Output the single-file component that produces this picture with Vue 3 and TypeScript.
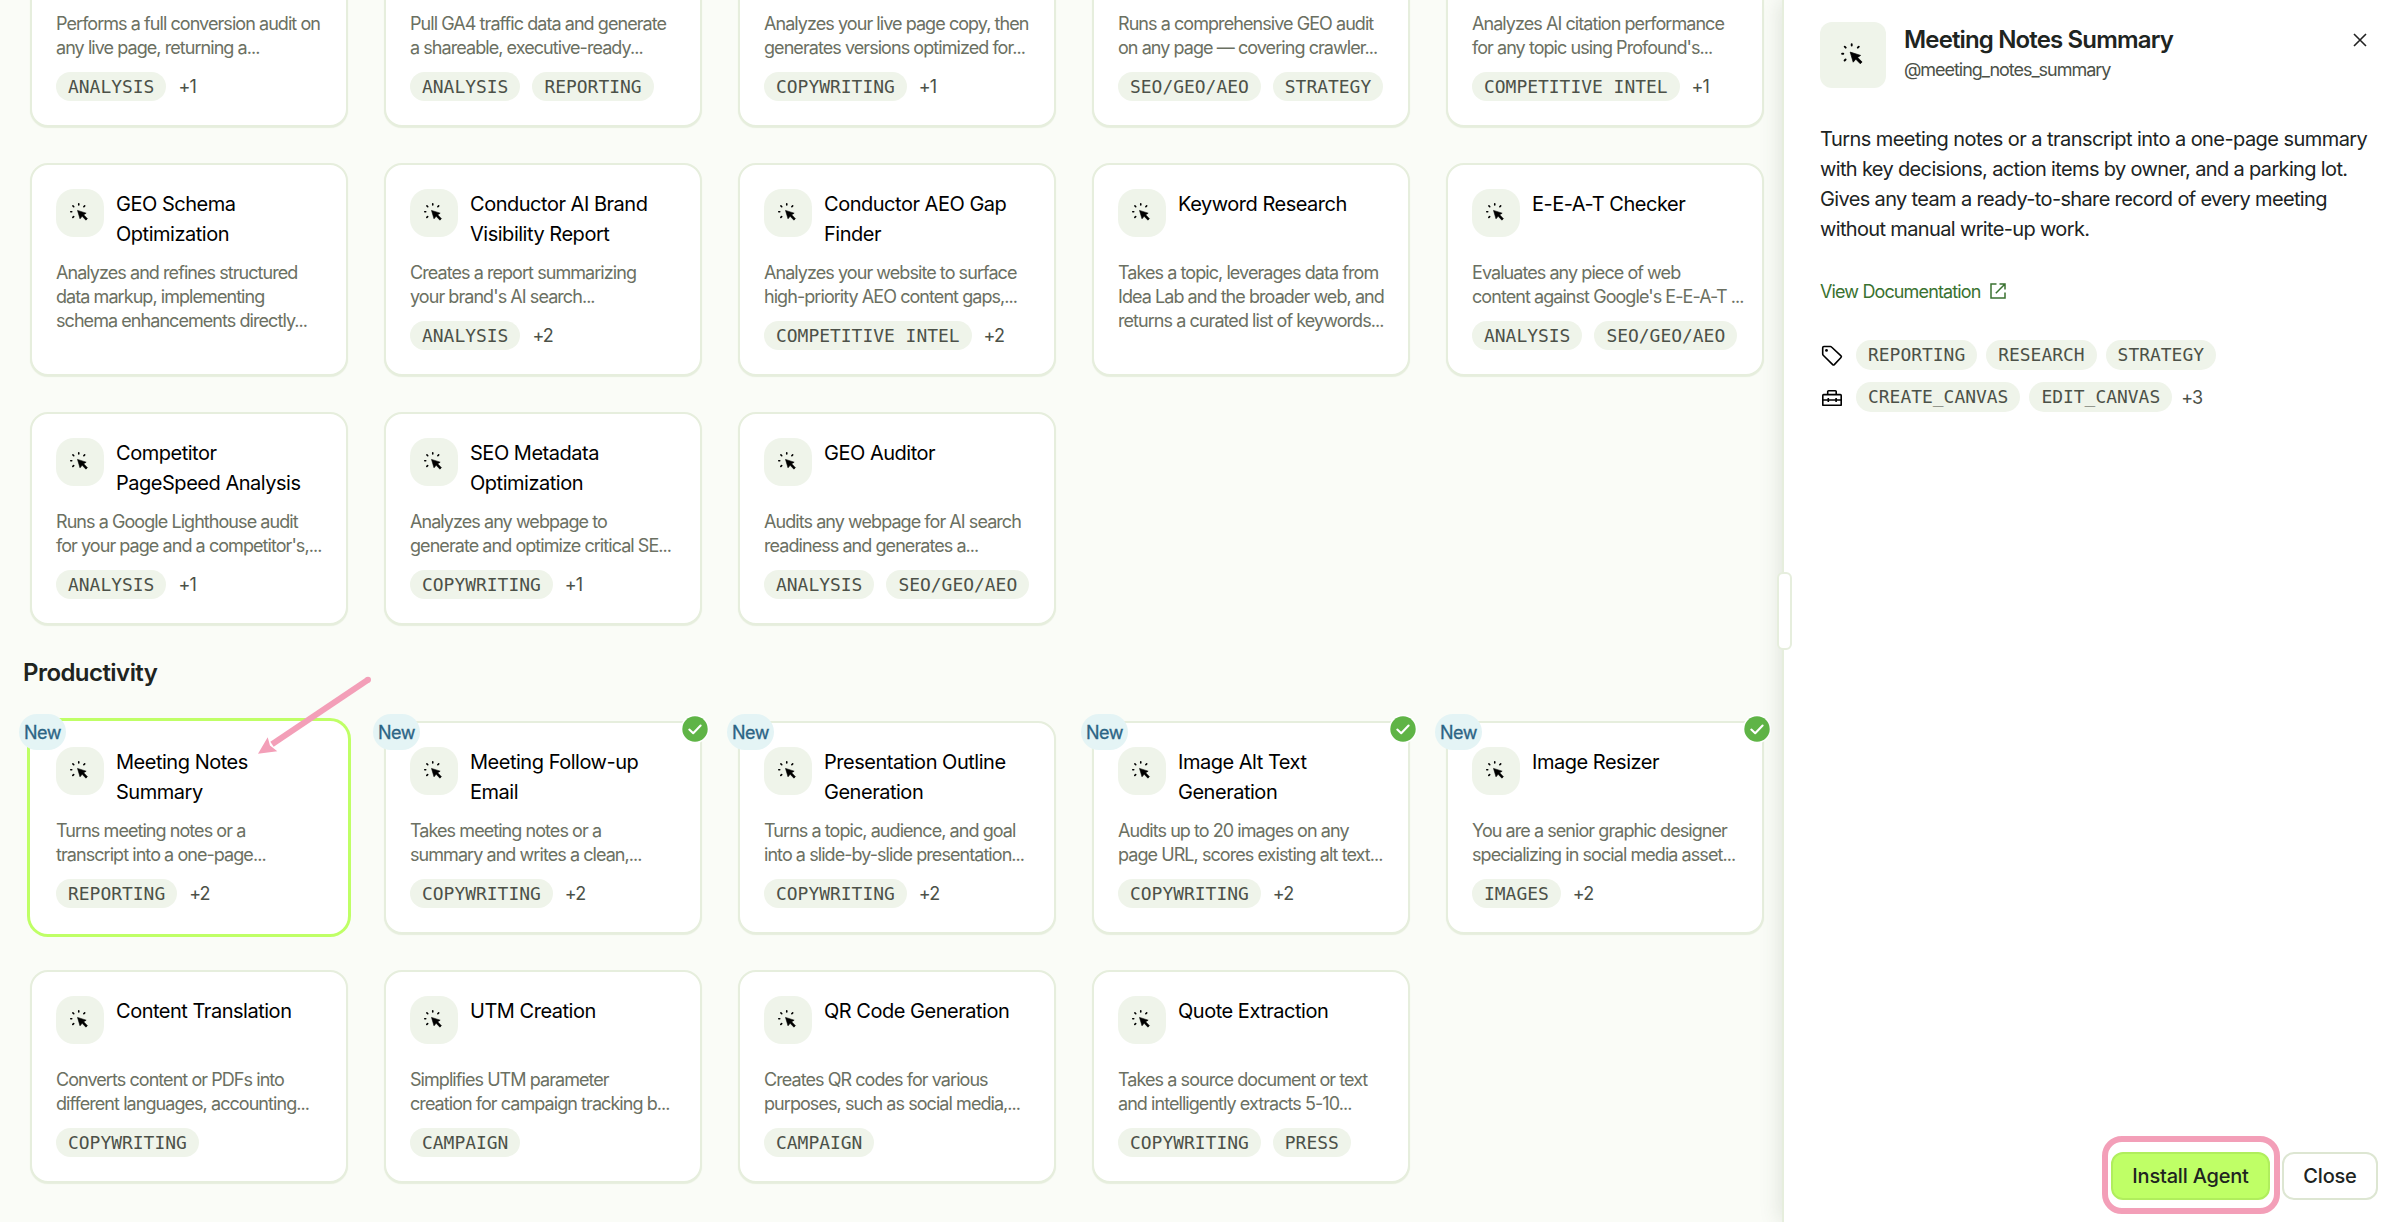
<script setup lang="ts">
interface Agent {
  title: string[]
  desc: string[]
  tags: string[]
  more?: string
  isNew?: boolean
  installed?: boolean
  selected?: boolean
}

const marketing: Agent[] = [
  { title: [], desc: ['Performs a full conversion audit on', 'any live page, returning a...'], tags: ['ANALYSIS'], more: '+1' },
  { title: [], desc: ['Pull GA4 traffic data and generate', 'a shareable, executive-ready...'], tags: ['ANALYSIS', 'REPORTING'] },
  { title: [], desc: ['Analyzes your live page copy, then', 'generates versions optimized for...'], tags: ['COPYWRITING'], more: '+1' },
  { title: [], desc: ['Runs a comprehensive GEO audit', 'on any page — covering crawler...'], tags: ['SEO/GEO/AEO', 'STRATEGY'] },
  { title: [], desc: ['Analyzes AI citation performance', "for any topic using Profound's..."], tags: ['COMPETITIVE INTEL'], more: '+1' },
  { title: ['GEO Schema', 'Optimization'], desc: ['Analyzes and refines structured', 'data markup, implementing', 'schema enhancements directly...'], tags: [] },
  { title: ['Conductor AI Brand', 'Visibility Report'], desc: ['Creates a report summarizing', "your brand's AI search..."], tags: ['ANALYSIS'], more: '+2' },
  { title: ['Conductor AEO Gap', 'Finder'], desc: ['Analyzes your website to surface', 'high-priority AEO content gaps,...'], tags: ['COMPETITIVE INTEL'], more: '+2' },
  { title: ['Keyword Research'], desc: ['Takes a topic, leverages data from', 'Idea Lab and the broader web, and', 'returns a curated list of keywords...'], tags: [] },
  { title: ['E-E-A-T Checker'], desc: ['Evaluates any piece of web', "content against Google's E-E-A-T ..."], tags: ['ANALYSIS', 'SEO/GEO/AEO'] },
  { title: ['Competitor', 'PageSpeed Analysis'], desc: ['Runs a Google Lighthouse audit', "for your page and a competitor's,..."], tags: ['ANALYSIS'], more: '+1' },
  { title: ['SEO Metadata', 'Optimization'], desc: ['Analyzes any webpage to', 'generate and optimize critical SE...'], tags: ['COPYWRITING'], more: '+1' },
  { title: ['GEO Auditor'], desc: ['Audits any webpage for AI search', 'readiness and generates a...'], tags: ['ANALYSIS', 'SEO/GEO/AEO'] },
]

const productivity: Agent[] = [
  { title: ['Meeting Notes', 'Summary'], desc: ['Turns meeting notes or a', 'transcript into a one-page...'], tags: ['REPORTING'], more: '+2', isNew: true, selected: true },
  { title: ['Meeting Follow-up', 'Email'], desc: ['Takes meeting notes or a', 'summary and writes a clean,...'], tags: ['COPYWRITING'], more: '+2', isNew: true, installed: true },
  { title: ['Presentation Outline', 'Generation'], desc: ['Turns a topic, audience, and goal', 'into a slide-by-slide presentation...'], tags: ['COPYWRITING'], more: '+2', isNew: true },
  { title: ['Image Alt Text', 'Generation'], desc: ['Audits up to 20 images on any', 'page URL, scores existing alt text...'], tags: ['COPYWRITING'], more: '+2', isNew: true, installed: true },
  { title: ['Image Resizer'], desc: ['You are a senior graphic designer', 'specializing in social media asset...'], tags: ['IMAGES'], more: '+2', isNew: true, installed: true },
  { title: ['Content Translation'], desc: ['Converts content or PDFs into', 'different languages, accounting...'], tags: ['COPYWRITING'] },
  { title: ['UTM Creation'], desc: ['Simplifies UTM parameter', 'creation for campaign tracking b...'], tags: ['CAMPAIGN'] },
  { title: ['QR Code Generation'], desc: ['Creates QR codes for various', 'purposes, such as social media,...'], tags: ['CAMPAIGN'] },
  { title: ['Quote Extraction'], desc: ['Takes a source document or text', 'and intelligently extracts 5-10...'], tags: ['COPYWRITING', 'PRESS'] },
]

const sections = [
  { name: '', agents: marketing },
  { name: 'Productivity', agents: productivity },
]

const summary = [
  'Turns meeting notes or a transcript into a one-page summary',
  'with key decisions, action items by owner, and a parking lot.',
  'Gives any team a ready-to-share record of every meeting',
  'without manual write-up work.',
]
</script>

<template>
  <div class="app">
    <svg width="0" height="0" class="defs">
      <symbol id="click" viewBox="0 0 24 24">
        <path d="M10.2 10.1 20.6 13.4 17.6 15.4 22.1 20 20.3 21.8 15.8 17.2 13.2 20.2Z" fill="#000" stroke="#000" stroke-width=".7" stroke-linejoin="round" />
        <path d="M11.7 2.2v1.4M4.7 4.7l1 1M18.8 4.7l-1 1M2.1 11.7h1.2M5.6 17.5l-1 1" fill="none" stroke="#000" stroke-width="1.9" stroke-linecap="round" />
      </symbol>
    </svg>

    <main class="library">
      <section v-for="section in sections" :key="section.name">
        <h2 v-if="section.name">{{ section.name }}</h2>
        <div class="grid">
          <article v-for="agent in section.agents" :key="agent.desc.join()" class="card" :class="{ selected: agent.selected }">
            <span v-if="agent.isNew" class="new">New</span>
            <span v-if="agent.installed" class="check">
              <svg viewBox="0 0 30 30" width="30" height="30">
                <circle cx="15" cy="15" r="14.3" fill="#fff" />
                <circle cx="15" cy="15" r="12.7" fill="#5fb446" />
                <path d="M9.3 15.6 13.2 19.2 20.6 11.6" fill="none" stroke="#fff" stroke-width="2.1" stroke-linecap="round" stroke-linejoin="round" />
              </svg>
            </span>
            <header>
              <template v-if="agent.title.length">
                <span class="tile"><svg width="20" height="20"><use href="#click" /></svg></span>
                <h3><span v-for="line in agent.title" :key="line">{{ line }}</span></h3>
              </template>
            </header>
            <p class="desc"><span v-for="line in agent.desc" :key="line">{{ line }}</span></p>
            <div v-if="agent.tags.length" class="tags">
              <span v-for="tag in agent.tags" :key="tag" class="tag">{{ tag }}</span>
              <span v-if="agent.more" class="more">{{ agent.more }}</span>
            </div>
          </article>
        </div>
      </section>
    </main>

    <aside class="panel">
      <span class="handle"></span>
      <header class="head">
        <span class="tile large"><svg width="24" height="24"><use href="#click" /></svg></span>
        <div class="names">
          <h1>Meeting Notes Summary</h1>
          <div class="slug">@meeting_notes_summary</div>
        </div>
        <svg class="close" viewBox="0 0 16 16" width="16" height="16"><path d="M2 2 14 14M14 2 2 14" stroke="#222" stroke-width="1.6" fill="none" /></svg>
      </header>
      <p class="summary"><span v-for="line in summary" :key="line">{{ line }}</span></p>
      <a class="doc">
        <span>View Documentation</span>
        <svg viewBox="0 0 18 18" width="18" height="18"><path d="M7.5 2H2v14h14v-5.5M10.5 2H16v5.5M16 2 6.8 11.2" fill="none" stroke="#3a7230" stroke-width="1.5" /></svg>
      </a>
      <div class="meta">
        <svg viewBox="0 0 24 24" width="24" height="24"><path d="M2.7 4.7Q2.7 3.5 3.9 3.5H10.4Q11 3.5 11.5 4L21 12.9Q21.8 13.7 21 14.5L14.3 21.6Q13.5 22.4 12.7 21.6L3.2 12.2Q2.7 11.7 2.7 11.1Z" fill="none" stroke="#000" stroke-width="1.6" stroke-linejoin="round" /><circle cx="6.5" cy="7.4" r="1.4" /></svg>
        <span class="tag">REPORTING</span><span class="tag">RESEARCH</span><span class="tag">STRATEGY</span>
      </div>
      <div class="meta">
        <svg viewBox="0 0 24 24" width="24" height="24"><path d="M7.7 9.6V6.6Q7.7 5.7 8.6 5.7H15.3Q16.2 5.7 16.2 6.6V9.6M3.6 9.6H20.4Q21.2 9.6 21.2 10.4V20.3H2.8V10.4Q2.8 9.6 3.6 9.6ZM2.8 15H21.2M8.3 13V17M16.1 13V17" fill="none" stroke="#000" stroke-width="1.6" stroke-linejoin="round" /></svg>
        <span class="tag">CREATE_CANVAS</span><span class="tag">EDIT_CANVAS</span><span class="more">+3</span>
      </div>
      <footer>
        <span class="ring"><button class="install">Install Agent</button></span>
        <button class="dismiss">Close</button>
      </footer>
    </aside>

    <svg class="arrow" viewBox="0 0 130 90" width="130" height="90">
      <path d="M118 9.8 22 74.2" stroke="#f39fb8" stroke-width="6" fill="none" />
      <circle cx="118" cy="9.8" r="3" fill="#f39fb8" />
      <path d="M8 83.7 17.7 67.3 20 75.6 27.3 81.2Z" fill="#f39fb8" />
    </svg>
  </div>
</template>

<style>
body {
  margin: 0;
  overflow: hidden;
}
</style>

<style scoped>
.app {
  display: flex;
  position: relative;
  width: 2398px;
  height: 1222px;
  overflow: hidden;
  background: #fafcf7;
  font-family: Inter, 'Liberation Sans', sans-serif;
}
.defs { position: absolute; }
h1, h2, h3, p { margin: 0; font-weight: 400; }
h3 span, p span { display: block; white-space: nowrap; }

.library {
  display: flex;
  flex-direction: column;
  justify-content: flex-end;
  flex: 1;
  box-sizing: border-box;
  padding: 0 18px 39px 30px;
}
.library h2 {
  margin: 30px 0 0 -7px;
  height: 66px;
  font-size: 24px;
  line-height: 36px;
  font-weight: 600;
  letter-spacing: -0.55px;
  color: #20241f;
}
.grid {
  display: grid;
  grid-template-columns: repeat(5, 318px);
  grid-auto-rows: 213px;
  gap: 36px;
}
.card {
  position: relative;
  box-sizing: border-box;
  padding: 24px;
  border: 2px solid #e6eedd;
  border-radius: 18px;
  background: #fff;
  box-shadow: 0 1px 1px #e6eedd;
}
.card.selected {
  border-color: #fff;
  box-shadow: 0 0 0 3px #bfff66;
}
.card header { display: flex; gap: 12px; height: 72px; }
.tile {
  display: flex;
  align-items: center;
  justify-content: center;
  flex: none;
  box-sizing: border-box;
  width: 48px;
  height: 48px;
  padding: 0 2px 3px 0;
  border-radius: 18px;
  background: #eff4ea;
}
.tile.large { width: 66px; height: 66px; padding: 0 2px 2px 0; border-radius: 12px; }
h3 {
  font-size: 20px;
  line-height: 30px;
  letter-spacing: -0.48px;
  color: #000;
}
.desc {
  font-size: 18px;
  line-height: 24px;
  letter-spacing: -0.94px;
  color: #6b7062;
}
.tags { display: flex; gap: 12px; margin-top: 12px; align-items: center; }
.tag {
  height: 29px;
  padding: 0 12px;
  border-radius: 15px;
  background: #eff4ea;
  font-family: 'DejaVu Sans Mono', 'Liberation Mono', monospace;
  font-size: 17.95px;
  line-height: 29px;
  color: #4c5148;
}
.more { font-size: 18px; line-height: 29px; color: #4c5148; letter-spacing: -0.9px; }
.new {
  position: absolute;
  left: -13px;
  top: -9px;
  width: 47px;
  height: 36px;
  border-radius: 18px;
  background: #e4f4f5;
  color: #2c6485;
  font-size: 18px;
  line-height: 37px;
  text-align: center;
  letter-spacing: -0.5px;
  -webkit-text-stroke: 0.3px #2c6485;
}
.check { position: absolute; right: -10px; top: -9px; height: 30px; }

.panel {
  position: relative;
  display: flex;
  flex-direction: column;
  box-sizing: border-box;
  width: 616px;
  padding: 22px 20px 0 36px;
  border-left: 2px solid #e6eedd;
  background: #fff;
  box-shadow: -2px 0 20px rgba(60, 80, 50, 0.14);
}
.handle {
  position: absolute;
  left: -7px;
  top: 572px;
  box-sizing: border-box;
  width: 15px;
  height: 78px;
  border: 2px solid #e6eedd;
  border-radius: 6px;
  background: #fff;
}
.head { display: flex; height: 102px; }
.names { margin-left: 18px; flex: 1; }
h1 {
  font-size: 24px;
  line-height: 36px;
  font-weight: 600;
  letter-spacing: -0.85px;
  color: #20241f;
}
.slug { font-size: 18px; line-height: 24px; letter-spacing: -1.04px; color: #4c5148; }
.close { margin: 10px 10px 0 0; }
.summary {
  font-size: 20px;
  line-height: 30px;
  letter-spacing: -0.65px;
  color: #20241f;
}
.summary span:first-child { letter-spacing: -0.56px; }
.doc {
  display: flex;
  align-items: center;
  gap: 9px;
  height: 24px;
  margin: 35px 0 37px;
  font-size: 18px;
  letter-spacing: -0.87px;
  color: #3a7230;
}
.meta { display: flex; align-items: center; gap: 9px; height: 30px; margin-bottom: 12px; }
.meta > svg { margin-right: 3px; }
.meta .tag { height: 30px; line-height: 30px; }
footer {
  display: flex;
  align-items: flex-start;
  justify-content: flex-end;
  margin: auto 0 8px;
}
.ring {
  box-sizing: border-box;
  padding: 10px 4px 8px 3px;
  border: 6px solid #f39fb8;
  border-radius: 20px;
}
button {
  display: block;
  box-sizing: border-box;
  height: 48px;
  padding: 0;
  border-radius: 12px;
  font-family: inherit;
  font-size: 20px;
  font-weight: 500;
  letter-spacing: -0.2px;
  color: #20241f;
}
.install { width: 159px; border: 2px solid #b0ee5d; background: #bfff66; }
.dismiss { width: 96px; margin: 16px 0 0 2px; border: 2px solid #dde6d2; background: #fff; }

.arrow { position: absolute; left: 250px; top: 670px; }
</style>
